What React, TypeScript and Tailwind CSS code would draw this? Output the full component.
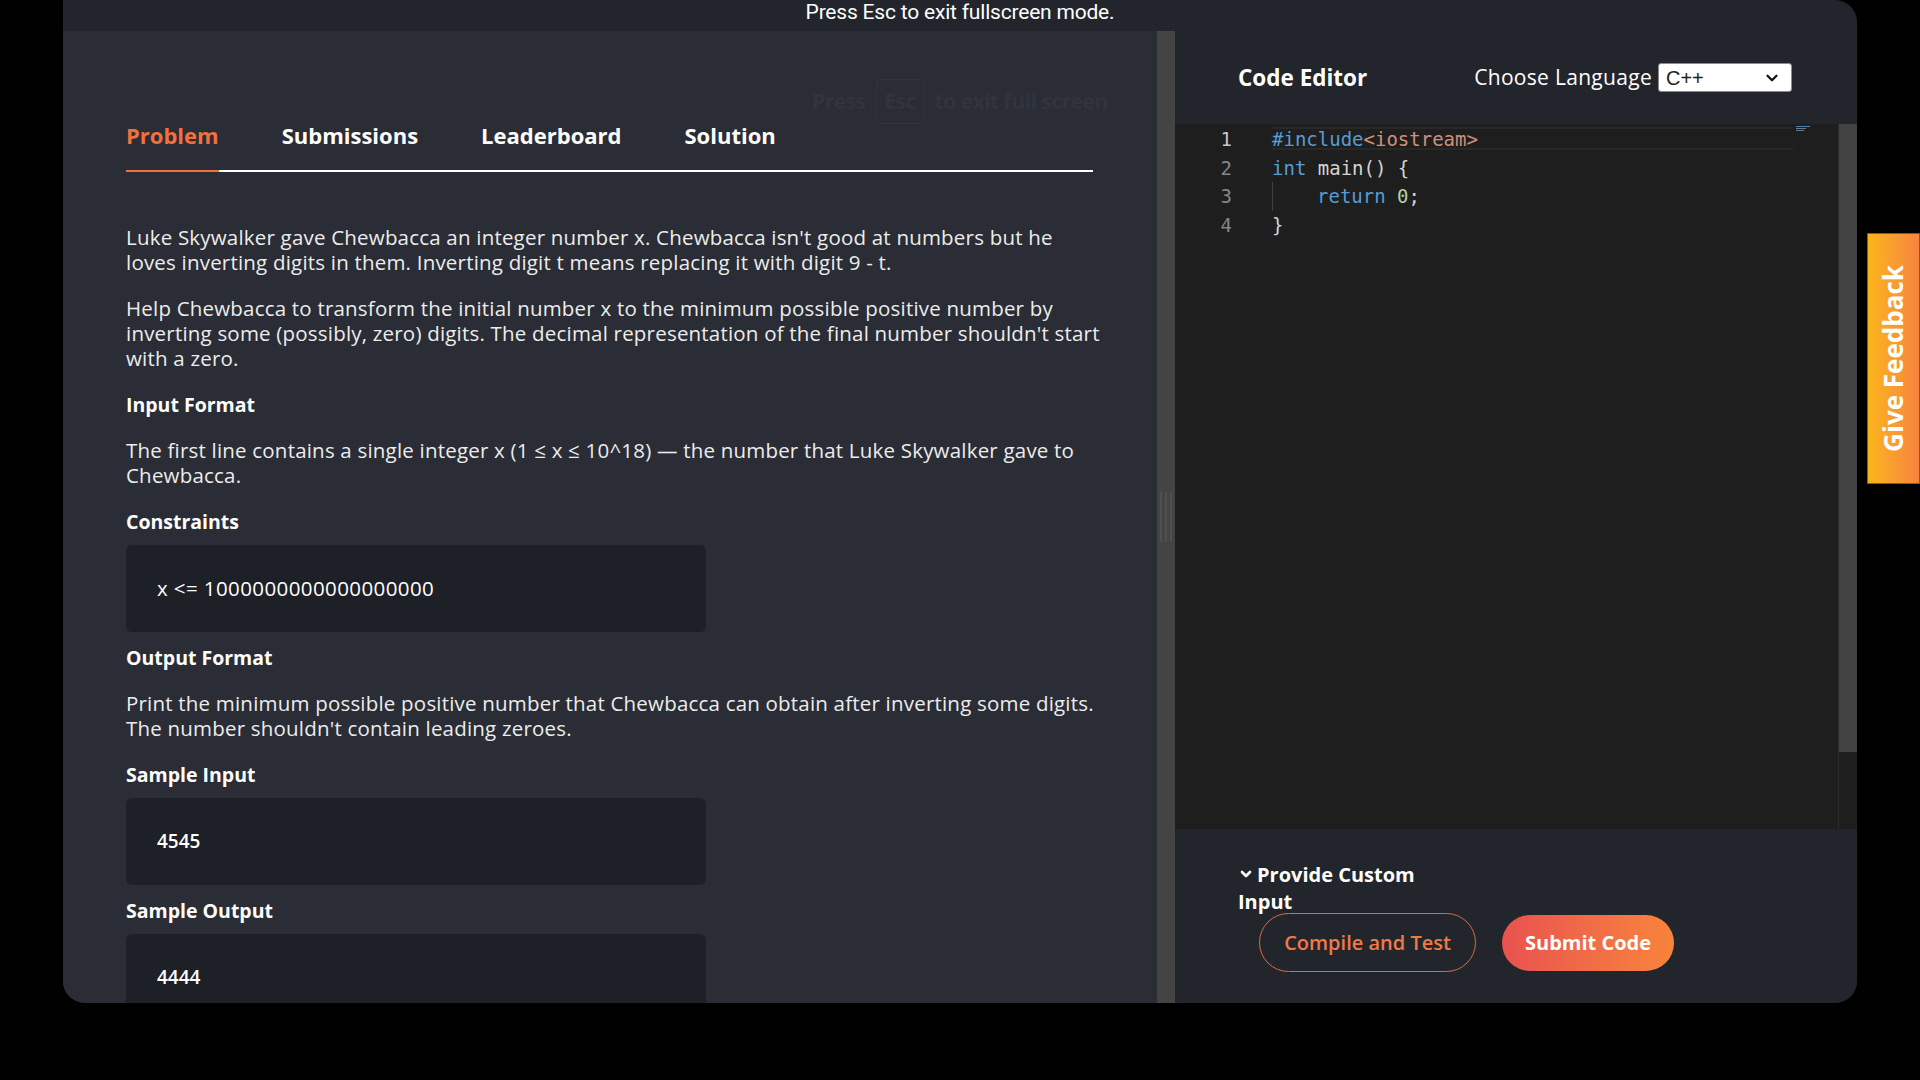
import { ChevronDown } from "lucide-react";

const body = "font-['Open_Sans',sans-serif]";

function Heading({ children, tight }: { children: React.ReactNode; tight?: boolean }) {
  return (
    <h4 className={`text-[19.5px] font-bold leading-[25px] text-white ${tight ? "mb-[11px]" : "mb-[21px]"}`}>
      {children}
    </h4>
  );
}

function Para({ children }: { children: React.ReactNode }) {
  return <p className="mb-[21px] text-[20.5px] leading-[25px] tracking-[0.2px] text-[#ececec]">{children}</p>;
}

function Box({ children, mono }: { children: React.ReactNode; mono?: boolean }) {
  return (
    <div
      className={`mb-[13px] flex h-[87px] w-[580px] items-center rounded-[6px] bg-[#1e2028] pl-[31px] text-white ${
        mono ? "text-[19px] font-semibold" : "text-[20.5px] tracking-[0.4px]"
      }`}
    >
      {children}
    </div>
  );
}

const tabs = ["Problem", "Submissions", "Leaderboard", "Solution"];

function ProblemPanel() {
  return (
    <section className={`relative w-[1094px] overflow-hidden bg-[#2a2d35] pl-[63px] pr-[53px] pt-[90px] ${body}`}>
      <div className="absolute left-[749px] top-[48px] flex items-center gap-[10px] text-[21px] font-bold tracking-[-0.5px] text-[#31343d]">
        <span>Press</span>
        <span className="flex h-[45px] w-[49px] items-center justify-center rounded-[6px] border border-[#31343d]">Esc</span>
        <span>to exit full screen</span>
      </div>

      <nav className="mr-[11px] flex gap-[63px] border-b-2 border-white">
        {tabs.map((t, i) => (
          <div
            key={t}
            className={`-mb-[2px] pb-[21px] text-[22px] font-bold leading-[28px] ${
              i === 0 ? "border-b-2 border-[#f0703f] text-[#f0703f]" : "border-b-2 border-transparent text-white"
            }`}
          >
            {t}
          </div>
        ))}
      </nav>

      <div className="pt-[53px]">
        <Para>
          Luke Skywalker gave Chewbacca an integer number x. Chewbacca isn't good at numbers but he loves inverting digits in
          them. Inverting digit t means replacing it with digit 9 - t.
        </Para>
        <Para>
          Help Chewbacca to transform the initial number x to the minimum possible positive number by inverting some
          (possibly, zero) digits. The decimal representation of the final number shouldn't start with a zero.
        </Para>
        <Heading>Input Format</Heading>
        <Para>The first line contains a single integer x (1 ≤ x ≤ 10^18) — the number that Luke Skywalker gave to Chewbacca.</Para>
        <Heading tight>Constraints</Heading>
        <Box>x &lt;= 1000000000000000000</Box>
        <Heading>Output Format</Heading>
        <Para>
          Print the minimum possible positive number that Chewbacca can obtain after inverting some digits. The number
          shouldn't contain leading zeroes.
        </Para>
        <Heading tight>Sample Input</Heading>
        <Box mono>4545</Box>
        <Heading tight>Sample Output</Heading>
        <Box mono>4444</Box>
      </div>
    </section>
  );
}

const blue = "text-[#569cd6]";

function CodeLines() {
  const nums = [1, 2, 3, 4];
  return (
    <div className="flex flex-1 pt-[1px] font-['DejaVu_Sans_Mono',monospace] text-[19px] leading-[28.7px]">
      <div className="w-[97px] pr-[40px] text-right">
        {nums.map((n) => (
          <div key={n} className={n === 1 ? "text-[#c6c6c6]" : "text-[#858585]"}>
            {n}
          </div>
        ))}
      </div>
      <div className="relative flex-1 pr-[45px] text-[#d4d4d4]">
        <div className="relative">
          <div className="absolute inset-x-0 top-[2px] h-[23px] border-y-2 border-[#282828]" />
          <span className={`relative ${blue}`}>#include</span>
          <span className="relative text-[#ce9178]">&lt;iostream&gt;</span>
        </div>
        <div>
          <span className={blue}>int</span> main() {"{"}
        </div>
        <div className="flex">
          <span className="w-[45px] border-l border-[#404040]" />
          <span className={blue}>return</span>&nbsp;<span className="text-[#b5cea8]">0</span>;
        </div>
        <div>{"}"}</div>
        <div className="absolute right-[28px] top-[1px] flex flex-col gap-[1px]">
          <span className="h-[1px] w-[14px] bg-[#4f7fa8]" />
          <span className="h-[1px] w-[10px] bg-[#7a7a7a]" />
          <span className="h-[1px] w-[8px] bg-[#4f7fa8]" />
        </div>
      </div>
    </div>
  );
}

function EditorPanel() {
  return (
    <section className={`flex flex-1 flex-col ${body}`}>
      <header className="flex h-[93px] items-center justify-between bg-[#23252d] pl-[63px] pr-[65px]">
        <h2 className="text-[22.5px] font-bold text-white">Code Editor</h2>
        <div className="flex items-center gap-[6px]">
          <span className="text-[21px] tracking-[0.3px] text-white">Choose Language</span>
          <div className="flex h-[29px] w-[134px] items-center justify-between rounded-[3px] border border-[#8a8a8a] bg-white pl-[7px] pr-[10px] font-['Liberation_Sans',sans-serif] text-[20px] font-light text-[#222]">
            <span>C++</span>
            <ChevronDown size={18} strokeWidth={3} className="text-[#111]" />
          </div>
        </div>
      </header>

      <div className="flex h-[705px] bg-[#1e1e1e]">
        <CodeLines />
        <div className="w-[19px] border-l border-[#2c2c2c]">
          <div className="h-[628px] bg-[#424242]" />
        </div>
      </div>

      <footer className="flex-1 bg-[#23252d] pl-[63px] pt-[32px]">
        <div className="w-[185px] text-[20px] font-bold leading-[27px] text-white">
          <ChevronDown size={16} strokeWidth={4} className="mr-[3px] inline-block align-[0px]" />
          Provide Custom Input
        </div>
        <div className="ml-[21px] mt-[-2px] flex items-center gap-[26px]">
          <button className="h-[59px] w-[217px] rounded-full border border-[#e0693f] text-[20px] font-semibold text-[#f07a45]">
            Compile and Test
          </button>
          <button className="h-[56px] w-[172px] rounded-full bg-linear-to-r from-[#e9514f] to-[#f8843a] text-[20px] font-bold text-white">
            Submit Code
          </button>
        </div>
      </footer>
    </section>
  );
}

export default function App() {
  return (
    <div className="relative h-[1080px] w-[1920px] overflow-hidden bg-black">
      <div className="ml-[63px] flex h-[1003px] w-[1794px] flex-col overflow-hidden rounded-b-[22px] rounded-tr-[22px] bg-[#22252c]">
        <div className="h-[31px] pt-[1px] text-center font-['Roboto',sans-serif] text-[21px] leading-[22px] tracking-[-0.2px] text-white">
          Press Esc to exit fullscreen mode.
        </div>
        <div className="flex min-h-0 flex-1">
          <ProblemPanel />
          <div className="flex w-[18px] items-center justify-center bg-[#444444]">
            <div className="flex h-[50px] gap-[3px]">
              <span className="w-[2px] bg-[#505050]" />
              <span className="w-[2px] bg-[#505050]" />
              <span className="w-[2px] bg-[#505050]" />
            </div>
          </div>
          <EditorPanel />
        </div>
      </div>

      <div className="absolute right-0 top-[233px] flex h-[251px] w-[53px] items-center justify-center border border-[#8a5a1a] bg-linear-to-r from-[#fbb416] to-[#f8843d]">
        <span className="-rotate-90 whitespace-nowrap font-['Open_Sans',sans-serif] text-[26px] font-bold text-white">
          Give Feedback
        </span>
      </div>
    </div>
  );
}
